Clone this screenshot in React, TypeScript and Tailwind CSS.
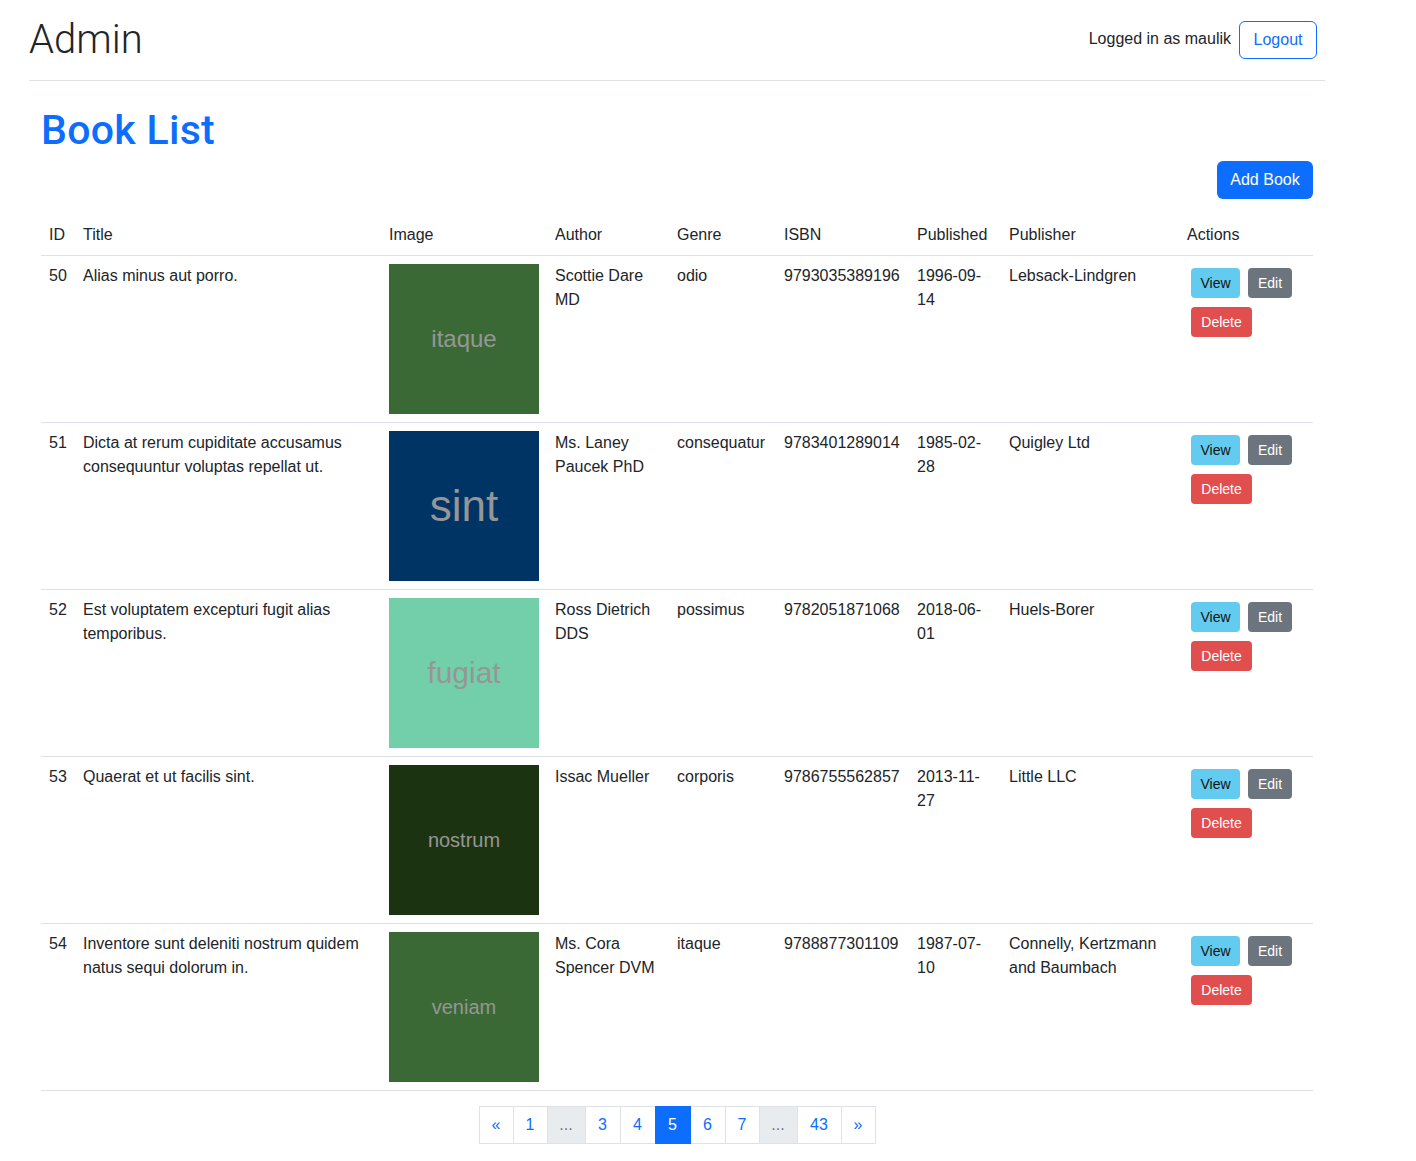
import React from 'react'

type Book = {
  id: number
  title: string
  img: { label: string; bg: string; size: string }
  author: string
  genre: string
  isbn: string
  published: string
  publisher: string
}

const BOOKS: Book[] = [
  {
    id: 50,
    title: 'Alias minus aut porro.',
    img: { label: 'itaque', bg: 'bg-[#3b6935]', size: 'text-[24px]' },
    author: 'Scottie Dare MD',
    genre: 'odio',
    isbn: '9793035389196',
    published: '1996-09-14',
    publisher: 'Lebsack-Lindgren',
  },
  {
    id: 51,
    title: 'Dicta at rerum cupiditate accusamus consequuntur voluptas repellat ut.',
    img: { label: 'sint', bg: 'bg-[#003464]', size: 'text-[44px]' },
    author: 'Ms. Laney Paucek PhD',
    genre: 'consequatur',
    isbn: '9783401289014',
    published: '1985-02-28',
    publisher: 'Quigley Ltd',
  },
  {
    id: 52,
    title: 'Est voluptatem excepturi fugit alias temporibus.',
    img: { label: 'fugiat', bg: 'bg-[#72cfa9]', size: 'text-[30px]' },
    author: 'Ross Dietrich DDS',
    genre: 'possimus',
    isbn: '9782051871068',
    published: '2018-06-01',
    publisher: 'Huels-Borer',
  },
  {
    id: 53,
    title: 'Quaerat et ut facilis sint.',
    img: { label: 'nostrum', bg: 'bg-[#1c3312]', size: 'text-[20px]' },
    author: 'Issac Mueller',
    genre: 'corporis',
    isbn: '9786755562857',
    published: '2013-11-27',
    publisher: 'Little LLC',
  },
  {
    id: 54,
    title: 'Inventore sunt deleniti nostrum quidem natus sequi dolorum in.',
    img: { label: 'veniam', bg: 'bg-[#3b6935]', size: 'text-[20px]' },
    author: 'Ms. Cora Spencer DVM',
    genre: 'itaque',
    isbn: '9788877301109',
    published: '1987-07-10',
    publisher: 'Connelly, Kertzmann and Baumbach',
  },
]

const PAGES: { label: string; w: string; kind: 'link' | 'gap' | 'active' }[] = [
  { label: '«', w: 'w-[35px]', kind: 'link' },
  { label: '1', w: 'w-[35px]', kind: 'link' },
  { label: '...', w: 'w-[39px]', kind: 'gap' },
  { label: '3', w: 'w-[36px]', kind: 'link' },
  { label: '4', w: 'w-[36px]', kind: 'link' },
  { label: '5', w: 'w-[36px]', kind: 'active' },
  { label: '6', w: 'w-[36px]', kind: 'link' },
  { label: '7', w: 'w-[35px]', kind: 'link' },
  { label: '...', w: 'w-[39px]', kind: 'gap' },
  { label: '43', w: 'w-[45px]', kind: 'link' },
  { label: '»', w: 'w-[35px]', kind: 'link' },
]

function Pagination() {
  return (
    <div className="flex justify-center mt-[15px]">
      {PAGES.map((p, i) => {
        const tone =
          p.kind === 'active'
            ? 'bg-[#0d6efd] border-[#0d6efd] text-white relative z-10'
            : p.kind === 'gap'
              ? 'bg-[#e9ecef] border-[#dee2e6] text-[#6c757d]'
              : 'bg-white border-[#dee2e6] text-[#0d6efd]'
        return (
          <span
            key={i}
            className={`${p.w} ${tone} ${i > 0 ? '-ml-px' : ''} h-[38px] border flex items-center justify-center text-[16px]`}
          >
            {p.label}
          </span>
        )
      })}
    </div>
  )
}

function Actions() {
  return (
    <div className="p-1">
      <div className="flex gap-2">
        <button className="w-[49px] h-[30px] rounded-[4px] bg-[#62cbef] text-[#111] text-[14px] flex items-center justify-center">
          View
        </button>
        <button className="w-[44px] h-[30px] rounded-[4px] bg-[#6c757d] text-white text-[14px] flex items-center justify-center">
          Edit
        </button>
      </div>
      <button className="mt-[9px] w-[61px] h-[30px] rounded-[4px] bg-[#e04f4d] text-white text-[14px] flex items-center justify-center">
        Delete
      </button>
    </div>
  )
}

export default function App() {
  return (
    <div className="bg-white text-[#212529] text-[16px] leading-6 font-['Liberation_Sans',Arial,sans-serif] pb-[18px]">
      <div className="ml-[29px] w-[1296px]">
        {/* Header */}
        <header className="h-[81px] flex items-center justify-between border-b border-[#dee2e6] pr-2">
          <span className="font-['Roboto',sans-serif] font-light text-[40px] leading-[48px] text-[#212529]">
            Admin
          </span>
          <div className="flex items-center gap-2">
            <span className="-mt-[3px]">Logged in as maulik</span>
            <button className="w-[78px] h-[38px] border border-[#0d6efd] rounded-[6px] text-[#0d6efd] flex items-center justify-center">
              Logout
            </button>
          </div>
        </header>

        <div className="px-3">
          <h1 className="font-['Roboto',sans-serif] font-medium text-[41px] tracking-[0.3px] leading-[48px] text-[#0d6efd] mt-[25px]">
            Book List
          </h1>
          <div className="flex justify-end mt-[7px] mb-[16px]">
            <button className="w-[96px] h-[38px] rounded-[6px] bg-[#0d6efd] text-white flex items-center justify-center">
              Add Book
            </button>
          </div>

          <table className="w-[1272px] table-fixed border-collapse">
            <colgroup>
              <col className="w-[34px]" />
              <col className="w-[306px]" />
              <col className="w-[166px]" />
              <col className="w-[122px]" />
              <col className="w-[107px]" />
              <col className="w-[133px]" />
              <col className="w-[92px]" />
              <col className="w-[178px]" />
              <col className="w-[134px]" />
            </colgroup>
            <thead>
              <tr className="border-b border-[#dee2e6]">
                {['ID', 'Title', 'Image', 'Author', 'Genre', 'ISBN', 'Published', 'Publisher', 'Actions'].map((h) => (
                  <th key={h} className="p-2 text-left font-normal">
                    {h}
                  </th>
                ))}
              </tr>
            </thead>
            <tbody>
              {BOOKS.map((b) => (
                <tr key={b.id} className="border-b border-[#dee2e6] align-top">
                  <td className="p-2">{b.id}</td>
                  <td className="p-2">{b.title}</td>
                  <td className="p-2">
                    <div className={`${b.img.bg} w-[150px] h-[150px] flex items-center justify-center`}>
                      <span className={`${b.img.size} text-[#969696] leading-none`}>{b.img.label}</span>
                    </div>
                  </td>
                  <td className="p-2">{b.author}</td>
                  <td className="p-2">{b.genre}</td>
                  <td className="p-2 whitespace-nowrap">{b.isbn}</td>
                  <td className="p-2">{b.published}</td>
                  <td className="p-2">{b.publisher}</td>
                  <td className="p-2">
                    <Actions />
                  </td>
                </tr>
              ))}
            </tbody>
          </table>

          <Pagination />
        </div>
      </div>
    </div>
  )
}
